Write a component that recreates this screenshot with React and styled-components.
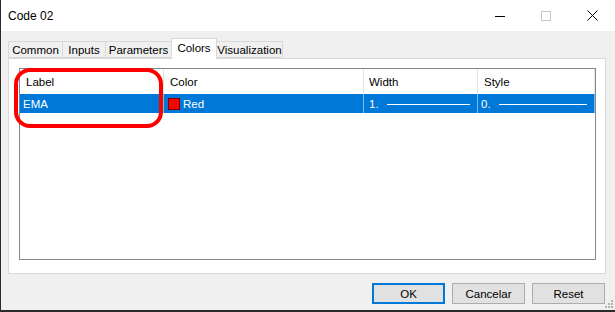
import React from 'react';
import styled, { createGlobalStyle } from 'styled-components';

const GlobalStyle = createGlobalStyle`
	html, body {
		margin: 0;
		padding: 0;
		background: #2b2b2b;
	}
	body {
		font-family: "Segoe UI", "Liberation Sans", Arial, sans-serif;
	}
`;

const tabs = [
	{ name: 'Common', width: 55 },
	{ name: 'Inputs', width: 44 },
	{ name: 'Parameters', width: 67 },
	{ name: 'Colors', width: 46, active: true },
	{ name: 'Visualization', width: 67 },
];

export default function App() {
	return (
		<>
			<GlobalStyle />
			<Window>
				<TitleBar>
					<Title>Code 02</Title>
					<Controls>
						<CaptionButton>
							<svg width="10" height="10" viewBox="0 0 10 10">
								<line x1="0" y1="5.5" x2="10" y2="5.5" stroke="#000" strokeWidth="1" />
							</svg>
						</CaptionButton>
						<CaptionButton>
							<svg width="10" height="10" viewBox="0 0 10 10">
								<rect x="0.5" y="0.5" width="9" height="9" fill="none" stroke="#c8c8c8" strokeWidth="1" />
							</svg>
						</CaptionButton>
						<CaptionButton>
							<svg width="11" height="11" viewBox="0 0 11 11">
								<path d="M0.5 0.5 L10.5 10.5 M10.5 0.5 L0.5 10.5" stroke="#000" strokeWidth="1" />
							</svg>
						</CaptionButton>
					</Controls>
				</TitleBar>
				<Body>
					<TabRow>
						{tabs.map((t) => (
							<Tab key={t.name} $width={t.width} $active={t.active}>
								{t.name}
							</Tab>
						))}
					</TabRow>
					<Panel>
						<Grid>
							<HeaderRow>
								<HeadCell $pad={6}>Label</HeadCell>
								<HeadCell $pad={6}>Color</HeadCell>
								<HeadCell $pad={5}>Width</HeadCell>
								<HeadCell $pad={6}>Style</HeadCell>
							</HeaderRow>
							<SelectedRow>
								<RowCell $pad={3}>EMA</RowCell>
								<RowCell $pad={4}>
									<Swatch />
									Red
								</RowCell>
								<RowCell $pad={5}>
									1.
									<StrokeLine />
								</RowCell>
								<RowCell $pad={3}>
									0.
									<StrokeLine />
								</RowCell>
							</SelectedRow>
						</Grid>
						<Highlight />
					</Panel>
					<Footer>
						<Button $primary>OK</Button>
						<Button>Cancelar</Button>
						<Button>Reset</Button>
					</Footer>
				</Body>
				<Grip>
					<svg width="9" height="9" viewBox="0 0 9 9">
						<rect x="6" y="0" width="2" height="2" fill="#b4b4b4" />
						<rect x="3" y="3" width="2" height="2" fill="#b4b4b4" />
						<rect x="6" y="3" width="2" height="2" fill="#b4b4b4" />
						<rect x="0" y="6" width="2" height="2" fill="#b4b4b4" />
						<rect x="3" y="6" width="2" height="2" fill="#b4b4b4" />
						<rect x="6" y="6" width="2" height="2" fill="#b4b4b4" />
					</svg>
				</Grip>
			</Window>
		</>
	);
}

const Window = styled.div`
	position: relative;
	margin-left: 1px;
	width: 614px;
	height: 310px;
	background: #f0f0f0;
	display: flex;
	flex-direction: column;
	font-size: 11.5px;
	color: #000;
`;

const TitleBar = styled.div`
	height: 31px;
	background: #fff;
	display: flex;
	align-items: center;
	padding-left: 7px;
`;

const Title = styled.span`
	font-size: 12px;
`;

const Controls = styled.div`
	margin-left: auto;
	display: flex;
	height: 100%;
`;

const CaptionButton = styled.div`
	width: 46px;
	height: 100%;
	display: flex;
	align-items: center;
	justify-content: center;
`;

const Body = styled.div`
	flex: 1;
	display: flex;
	flex-direction: column;
	padding: 7px 9px 0 7px;
`;

const TabRow = styled.div`
	display: flex;
	align-items: flex-end;
	height: 20px;
	position: relative;
	z-index: 1;
`;

const Tab = styled.div`
	box-sizing: border-box;
	width: ${(p) => p.$width}px;
	height: ${(p) => (p.$active ? 21 : 17)}px;
	margin-left: -1px;
	margin-bottom: ${(p) => (p.$active ? -1 : 0)}px;
	border: 1px solid #d9d9d9;
	border-bottom: ${(p) => (p.$active ? 'none' : '1px solid #d9d9d9')};
	background: ${(p) => (p.$active ? '#fff' : '#f0f0f0')};
	display: flex;
	align-items: center;
	justify-content: center;
	padding-bottom: ${(p) => (p.$active ? 3 : 0)}px;

	&:first-child {
		margin-left: 0;
	}
`;

const Panel = styled.div`
	position: relative;
	box-sizing: border-box;
	height: 216px;
	border: 1px solid #d9d9d9;
	background: #fff;
	padding: 9px 9px 13px 10px;
	display: flex;
`;

const Grid = styled.div`
	flex: 1;
	border: 1px solid #828790;
	background: #fff;
`;

const columns = '144px 200px 114px 1fr';

const HeaderRow = styled.div`
	display: grid;
	grid-template-columns: ${columns};
	height: 25px;
`;

const HeadCell = styled.div`
	display: flex;
	align-items: center;
	padding-left: ${(p) => p.$pad}px;
	border-right: 1px solid #e5e5e5;
`;

const SelectedRow = styled.div`
	display: grid;
	grid-template-columns: ${columns};
	height: 19px;
	background: #0078d7;
	color: #fff;
`;

const RowCell = styled.div`
	display: flex;
	align-items: center;
	padding-left: ${(p) => p.$pad}px;
	border-right: 1px solid #7fb7e8;
	min-width: 0;
`;

const Swatch = styled.span`
	box-sizing: border-box;
	width: 12px;
	height: 12px;
	background: #ff0000;
	border: 1px solid #7a0000;
	margin-right: 3px;
`;

const StrokeLine = styled.span`
	flex: 1;
	height: 1px;
	background: #fff;
	margin: 1px 7px 0 8px;
`;

const Highlight = styled.div`
	position: absolute;
	left: 5px;
	top: 9px;
	width: 149px;
	height: 60px;
	box-sizing: border-box;
	border: 4px solid #ff0000;
	border-radius: 16px;
	pointer-events: none;
`;

const Footer = styled.div`
	display: flex;
	justify-content: flex-end;
	gap: 7px;
	padding: 9px 1px 0 0;
`;

const Button = styled.div`
	box-sizing: border-box;
	width: 73px;
	height: 21px;
	background: #e1e1e1;
	border: ${(p) => (p.$primary ? '2px solid #0078d7' : '1px solid #adadad')};
	display: flex;
	align-items: center;
	justify-content: center;
`;

const Grip = styled.div`
	position: absolute;
	right: 1px;
	bottom: 1px;
	width: 9px;
	height: 9px;
	display: flex;
`;
